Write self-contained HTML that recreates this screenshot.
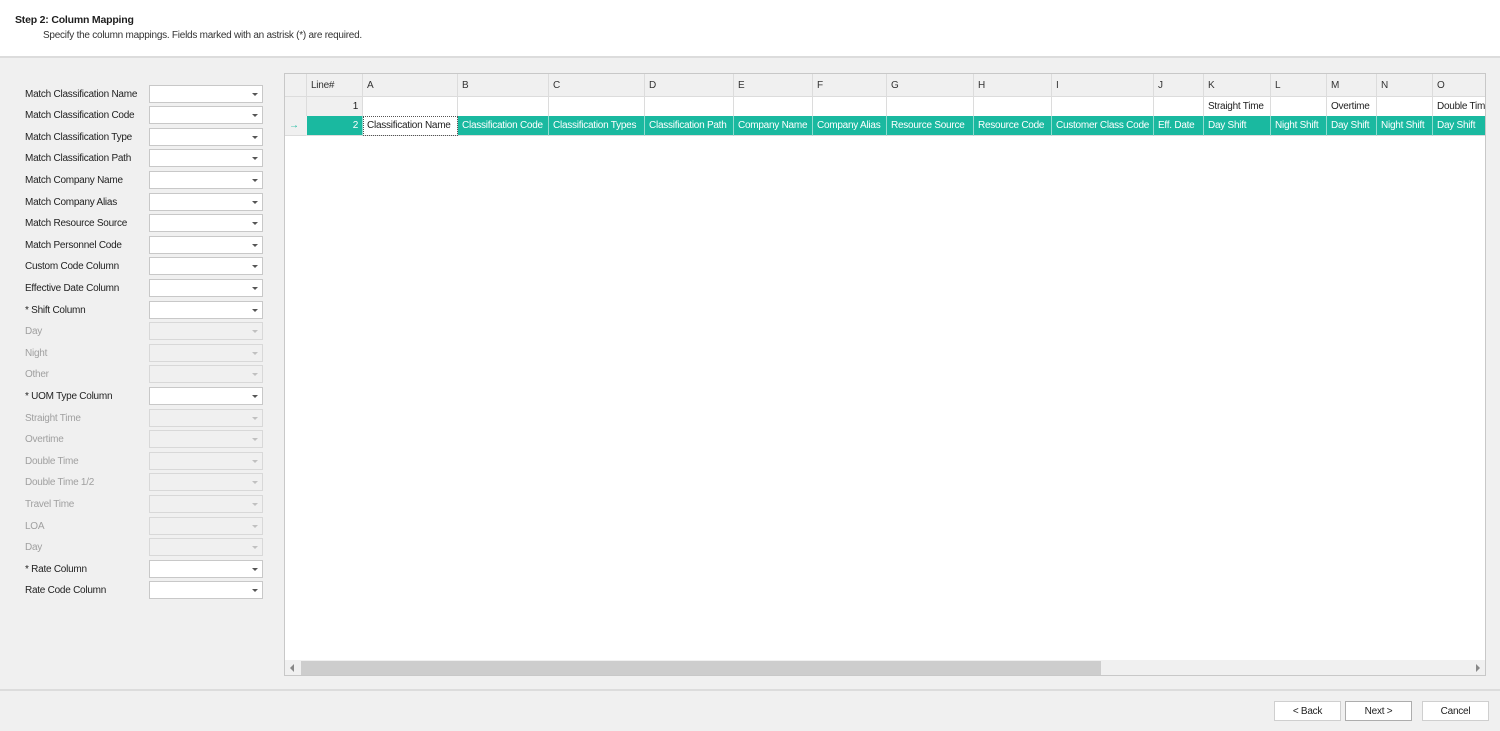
<!DOCTYPE html>
<html><head><meta charset="utf-8"><style>
*{margin:0;padding:0;box-sizing:border-box}
body{width:1500px;height:731px;background:#f0f0f0;font-family:"Liberation Sans",sans-serif;font-size:10px;letter-spacing:-0.25px;color:#1e1e1e;position:relative;overflow:hidden}
.top{position:absolute;left:0;top:0;width:1500px;height:58px;background:#fff;border-bottom:2px solid #dcdcdc}
.t1{position:absolute;left:15px;top:14px;font-weight:bold;font-size:10.5px;letter-spacing:-0.2px}
.t2{position:absolute;left:43px;top:30px;font-size:10px;color:#333}
.lbl{position:absolute;left:25px;font-size:10px;color:#222}
.lbl.d{color:#a0a0a0}
.cb{position:absolute;left:149px;width:114px;height:18px;background:#fff;border:1px solid #c8c8c8}
.cb.d{background:#f0f0f0;border-color:#d8d8d8}
.cb:after{content:"";position:absolute;right:4px;top:7px;border-left:3px solid transparent;border-right:3px solid transparent;border-top:3px solid #555}
.cb.d:after{border-top-color:#c0c0c0}
.grid{position:absolute;left:284px;top:73px;width:1202px;height:603px;background:#fff;border:1px solid #c8c8c8;overflow:hidden}
.c{position:absolute;height:20px;line-height:20px;padding:0 4px;white-space:nowrap;overflow:hidden;border-right:1px solid #dcdcdc;border-bottom:1px solid #dcdcdc;font-size:10px}
.h{background:#f0f0f0;color:#333;height:23px;line-height:24px}
.tl{background:#1ab9a0;color:#fff;border-right-color:#8fdccf}
.sb{position:absolute;left:0;top:586px;width:1200px;height:16px;background:#f0f0f0}
.th{position:absolute;left:16px;top:1px;width:800px;height:14px;background:#cdcdcd}
.foot{position:absolute;left:0;top:689px;width:1500px;height:2px;background:#dcdcdc}
.btn{position:absolute;top:701px;height:20px;width:67px;background:#fff;border:1px solid #cfcfcf;text-align:center;line-height:19px;font-size:10px}
</style></head><body>
<div class="top"><div class="t1">Step 2: Column Mapping</div><div class="t2">Specify the column mappings. Fields marked with an astrisk (*) are required.</div></div>
<div id="left"></div>
<div class="grid" id="g"><div class="sb"><div class="th"></div><div style="position:absolute;left:5px;top:4px;border-top:4px solid transparent;border-bottom:4px solid transparent;border-right:4px solid #888"></div><div style="position:absolute;right:5px;top:4px;border-top:4px solid transparent;border-bottom:4px solid transparent;border-left:4px solid #888"></div></div></div>
<div class="foot"></div>
<div class="btn" style="left:1274px">&lt; Back</div>
<div class="btn" style="left:1345px;border-color:#adadad">Next &gt;</div>
<div class="btn" style="left:1422px">Cancel</div>
<script>
var L=[["Match Classification Name",0],["Match Classification Code",0],["Match Classification Type",0],["Match Classification Path",0],["Match Company Name",0],["Match Company Alias",0],["Match Resource Source",0],["Match Personnel Code",0],["Custom Code Column",0],["Effective Date Column",0],["* Shift Column",0],["Day",1],["Night",1],["Other",1],["* UOM Type Column",0],["Straight Time",1],["Overtime",1],["Double Time",1],["Double Time 1/2",1],["Travel Time",1],["LOA",1],["Day",1],["* Rate Column",0],["Rate Code Column",0]];
var h="";L.forEach(function(l,i){var y=93.5+i*21.6;h+='<div class="lbl'+(l[1]?' d':'')+'" style="top:'+(y-5)+'px">'+l[0]+'</div><div class="cb'+(l[1]?' d':'')+'" style="top:'+(y-9)+'px"></div>';});
document.getElementById('left').innerHTML=h;
var X=[0,22,78,173,264,360,449,528,602,689,767,869,919,986,1042,1092,1148,1220];
var H=["","Line#","A","B","C","D","E","F","G","H","I","J","K","L","M","N","O"];
var R1=["","1","","","","","","","","","","","Straight Time","","Overtime","","Double Time"];
var R2=["","2","Classification Name","Classification Code","Classification Types","Classification Path","Company Name","Company Alias","Resource Source","Resource Code","Customer Class Code","Eff. Date","Day Shift","Night Shift","Day Shift","Night Shift","Day Shift"];
var g="";for(var i=0;i<17;i++){var w=X[i+1]-X[i];
g+='<div class="c h" style="left:'+X[i]+'px;top:0;width:'+w+'px">'+H[i]+'</div>';
var ra=i==1?'text-align:right;background:#f0f0f0;':'';
g+='<div class="c" style="left:'+X[i]+'px;top:23px;width:'+w+'px;'+ra+(i==0?'background:#f0f0f0;':'')+'">'+R1[i]+'</div>';
var st=i==1?'text-align:right;':'';
if(i==0){g+='<div class="c" style="left:0;top:42px;width:22px;color:#1ab9a0;background:#f0f0f0;border-right-color:#f0f0f0">&rarr;</div>';}
else if(i==2){g+='<div class="c" style="left:'+X[i]+'px;top:42px;width:'+w+'px;outline:1px dotted #555;outline-offset:-1px;background:#fff">'+R2[i]+'</div>';}
else g+='<div class="c tl" style="left:'+X[i]+'px;top:42px;width:'+w+'px;'+st+'">'+R2[i]+'</div>';}
document.getElementById('g').insertAdjacentHTML('afterbegin',g);
</script>
</body></html>
